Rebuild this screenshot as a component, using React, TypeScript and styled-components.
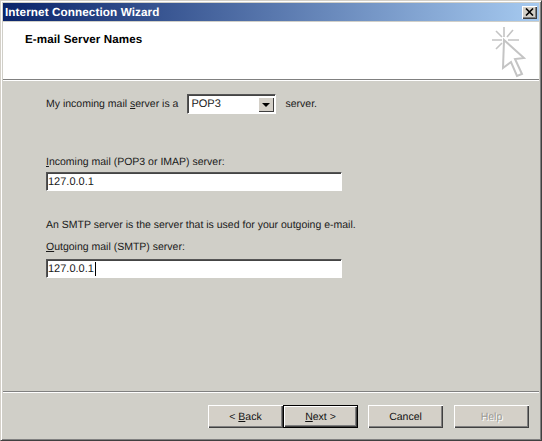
import React from "react";
import styled, { createGlobalStyle } from "styled-components";

const Global = createGlobalStyle`
  html, body { margin: 0; padding: 0; background: #d4d0c8; }
  body { font-family: "Liberation Sans", Arial, sans-serif; font-size: 10.5px; color: #1a1a1a; text-rendering: geometricPrecision; }
`;

const Win = styled.div`
  width: 542px; height: 441px; box-sizing: border-box; background: #d0cfc8;
  border-top: 1px solid #d4d0c8; border-left: 1px solid #d4d0c8;
  border-right: 1px solid #404040; border-bottom: 1px solid #404040;
  box-shadow: inset 1px 1px 0 #fff, inset -1px -1px 0 #808080;
  padding: 2px; display: flex; flex-direction: column; overflow: hidden;
`;
const TitleBar = styled.div`
  height: 18px; flex: none; background: linear-gradient(90deg, #0a246a, #a6caf0);
  display: flex; align-items: center; justify-content: space-between; padding: 0 2px 0 2px;
`;
const TitleText = styled.span`color: #fff; font-weight: 700; font-size: 11.7px; letter-spacing: 0.1px;`;
const CloseBtn = styled.div`
  width: 15px; height: 13px; background: #d4d0c8; display: flex; align-items: center; justify-content: center;
  box-shadow: inset 1px 1px 0 #fff, inset -1px -1px 0 #404040, inset -2px -2px 0 #808080;
`;
const Header = styled.div`
  height: 58px; flex: none; background: #fff; margin-top: 1px; padding: 11px 0 0 22px;
  box-sizing: border-box; display: flex; justify-content: space-between; align-items: flex-start;
  border-bottom: 1px solid #808080; box-shadow: 0 1px 0 #fff;
`;
const HeaderTitle = styled.div`font-weight: 700; font-size: 11.6px; color: #000; letter-spacing: 0.1px;`;
const WizardIcon = styled.svg`margin: -8px 13px 0 0;`;
const Body = styled.div`flex: 1; padding: 14px 0 0 43px; display: flex; flex-direction: column;`;
const TypeRow = styled.div`display: flex; align-items: center; height: 20px;`;
const Sel = styled.div`
  width: 89px; height: 20px; margin: 0 9px 0 9px; background: #fff; box-sizing: border-box; position: relative;
  border: 1px solid; border-color: #555 #fff #fff #555; box-shadow: inset 1px 1px 0 #444;
  display: flex; align-items: center; padding-left: 3px; font-size: 11px;
`;
const Arrow = styled.div`
  position: absolute; right: 1px; top: 2px; bottom: 1px; width: 16px; background: #d4d0c8;
  box-shadow: inset 1px 1px 0 #fff, inset -1px -1px 0 #404040;
  display: flex; align-items: center; justify-content: center;
`;
const Tri = styled.div`width: 0; height: 0; border-left: 4px solid transparent; border-right: 4px solid transparent; border-top: 4px solid #000;`;
const Label = styled.div<{ $top: number }>`margin-top: ${p => p.$top}px; height: 14px; line-height: 14px;`;
const Field = styled.div<{ $top: number }>`
  width: 296px; height: 19px; margin-top: ${p => p.$top}px; background: #fff; box-sizing: border-box;
  border: 1px solid; border-color: #555 #fff #fff #555; box-shadow: inset 1px 1px 0 #444;
  display: flex; align-items: center; padding-left: 1px; font-size: 11px;
`;
const Caret = styled.span`display: inline-block; width: 1px; height: 14px; background: #000; margin-left: 1px;`;
const Sep = styled.div`height: 1px; flex: none; background: #808080; box-shadow: 0 1px 0 #fff;`;
const Footer = styled.div`
  height: 46px; flex: none; box-sizing: border-box; padding: 13px 10px 0 0; display: flex; justify-content: flex-end;
`;
const Btn = styled.div<{ $def?: boolean; $dis?: boolean; $gap?: number }>`
  width: 75px; height: 23px; box-sizing: border-box; margin-left: ${p => p.$gap ?? 0}px;
  background: #d4d0c8; display: flex; align-items: center; justify-content: center; font-size: 10.5px;
  color: ${p => (p.$dis ? "#9a9a94" : "#111")};
  ${p => p.$dis ? "text-shadow: 1px 1px 0 #fff;" : ""}
  box-shadow: inset 1px 1px 0 #fff, inset -1px -1px 0 #404040, inset -2px -2px 0 #808080;
  ${p => p.$def ? "border: 1px solid #000;" : ""}
`;

export default function App() {
  return (
    <Win>
      <Global />
      <TitleBar>
        <TitleText>Internet Connection Wizard</TitleText>
        <CloseBtn>
          <svg width="9" height="8" viewBox="0 0 9 8"><path d="M1 0.5 L8 7.5 M8 0.5 L1 7.5" stroke="#000" strokeWidth="1.6" /></svg>
        </CloseBtn>
      </TitleBar>
      <Header>
        <HeaderTitle>E-mail Server Names</HeaderTitle>
        <WizardIcon width="36" height="53" viewBox="0 0 36 53" fill="none">
          <g stroke="#c4c4c4" strokeWidth="1.6">
            <path d="M14 2V12M2 15H12M18 15H29M6 6L12 12M23 5L17 12M6 24L12 18" />
          </g>
          <path d="M14 15 L13 43 L21 37 L27 51 L32 49 L25 34 L34 33 Z" fill="#fff" stroke="#c4c4c4" strokeWidth="2" />
        </WizardIcon>
      </Header>
      <Body>
        <TypeRow>
          <span>My incoming mail <u>s</u>erver is a</span>
          <Sel>POP3<Arrow><Tri /></Arrow></Sel>
          <span>server.</span>
        </TypeRow>
        <Label $top={41}><u>I</u>ncoming mail (POP3 or IMAP) server:</Label>
        <Field $top={3}>127.0.0.1</Field>
        <Label $top={27}>An SMTP server is the server that is used for your outgoing e-mail.</Label>
        <Label $top={8}><u>O</u>utgoing mail (SMTP) server:</Label>
        <Field $top={5}>127.0.0.1<Caret /></Field>
      </Body>
      <Sep />
      <Footer>
        <Btn>&lt;&nbsp;<u>B</u>ack</Btn>
        <Btn $def>
          <span><u>N</u>ext &gt;</span>
        </Btn>
        <Btn $gap={10}>Cancel</Btn>
        <Btn $gap={11} $dis>Help</Btn>
      </Footer>
    </Win>
  );
}
